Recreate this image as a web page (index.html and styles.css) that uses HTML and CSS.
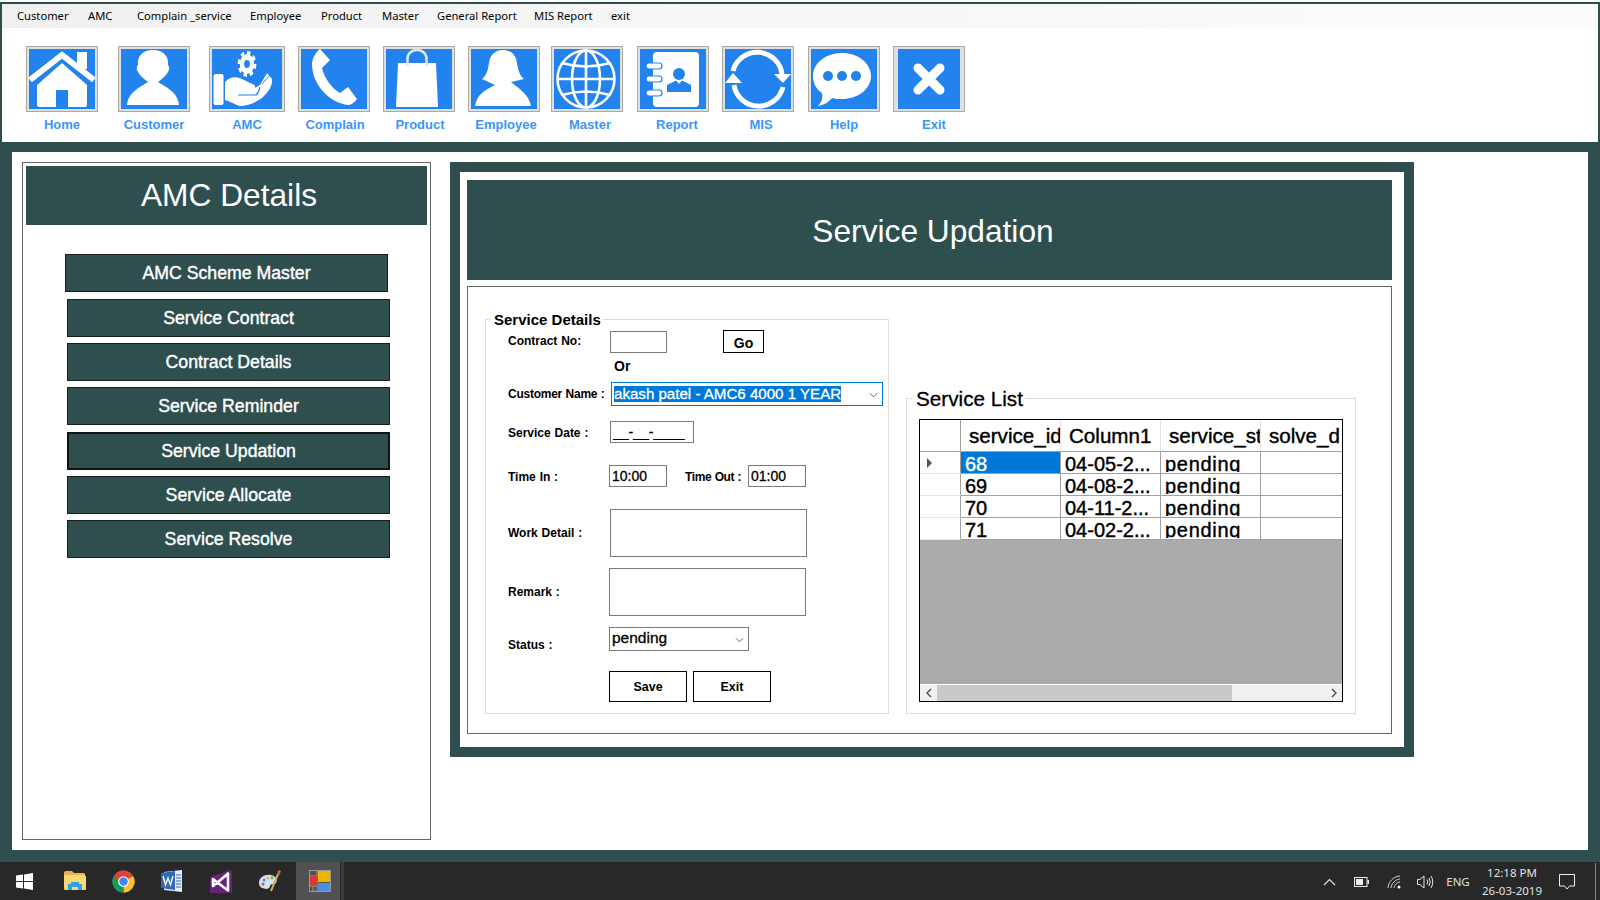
FILE: index.html
```html
<!DOCTYPE html>
<html lang="en">
<head>
  <meta charset="UTF-8">
  <meta name="viewport" content="width=device-width, initial-scale=1.0">
  <title>Service Updation</title>
  <link rel="stylesheet" href="styles.css">
</head>
<body>
  <div class="frame">
    <header class="header">
      <nav class="menu">
        <span>Customer</span>
        <span>AMC</span>
        <span>Complain _service</span>
        <span>Employee</span>
        <span>Product</span>
        <span>Master</span>
        <span>General Report</span>
        <span>MIS Report</span>
        <span>exit</span>
      </nav>
      <div class="toolbar">
        <div class="tool">
          <div class="tool-box">
            <svg viewBox="0 0 66 60" class="tool-icon">
              <path d="M1 31 L33 6 L65 31" class="line" stroke-width="6"/>
              <path d="M48 3 H58 V20 H48Z" class="solid"/>
              <path d="M33 14 L58 36 V56 Q58 58 56 58 H39 V41 H27 V58 H10 Q8 58 8 56 V36Z" class="solid"/>
            </svg>
          </div>
          <div class="tool-label">Home</div>
        </div>
        <div class="tool">
          <div class="tool-box">
            <svg viewBox="0 0 66 60" class="tool-icon">
              <path d="M6 56 C7 46 13 41 27 33 C22 29 18 26 16.5 22 C15 20 16 17 17 16 C16 7 22 1 32 1 C42 1 48 7 47 16 C48 17 49 20 47.5 22 C46 26 42 29 37 33 C51 41 57 46 58 56Z" class="solid"/>
            </svg>
          </div>
          <div class="tool-label">Customer</div>
        </div>
        <div class="tool tool-wide">
          <div class="tool-box">
            <svg viewBox="0 0 70 60" class="tool-icon">
              <g transform="translate(35 15) scale(0.72 1)">
                <circle r="10" class="solid"/>
                <circle r="11" class="teeth" stroke-width="4" stroke-dasharray="4.6 4"/>
                <circle r="4" class="hole"/>
              </g>
              <rect x="1.5" y="25" width="10" height="31" rx="2" class="solid"/>
              <path d="M13 33 C17 28 24 27 30 30 L38 34 C42 35 44 37 43 39 L48 36 L55 24 L60 30 C61 36 56 44 51 48 C44 54 34 57 28 57 C23 56 18 52 13 51Z" class="solid"/>
              <path d="M26 46 H43 C46 46 47 42 48 38" class="cut" stroke-width="1.2"/>
              <path d="M47 32 L55 23 M50 35 L58 26" class="cut" stroke-width="1"/>
            </svg>
          </div>
          <div class="tool-label">AMC</div>
        </div>
        <div class="tool">
          <div class="tool-box">
            <svg viewBox="0 0 66 60" class="tool-icon">
              <path d="M19 0 L29 11 L21 19 C23 28 30 39 39 44 L47 38 L56 50 C53 54 50 56 47 56 C30 54 12 38 11 16 C11 10 14 4 19 0Z" class="solid"/>
            </svg>
          </div>
          <div class="tool-label nudge-1">Complain</div>
        </div>
        <div class="tool">
          <div class="tool-box">
            <svg viewBox="0 0 66 60" class="tool-icon">
              <path d="M12 14 H50 L52 58 H10Z" class="solid"/>
              <path d="M21.5 17 V10 C21.5 -2 40.5 -2 40.5 10 V17" class="handle" stroke-width="2.5"/>
            </svg>
          </div>
          <div class="tool-label nudge-1">Product</div>
        </div>
        <div class="tool">
          <div class="tool-box">
            <svg viewBox="0 0 66 60" class="tool-icon">
              <path d="M4 57 C6 46 12 42 24 36 L11 30 C16 26 17 20 18 14 C19 5 25 1 32 1 C39 1 45 5 46 14 C47 20 48 26 53 30 L40 33 C50 41 58 46 60 57Z" class="solid"/>
            </svg>
          </div>
          <div class="tool-label nudge-2">Employee</div>
        </div>
        <div class="tool">
          <div class="tool-box">
            <svg viewBox="0 0 66 60" class="tool-icon">
              <g class="line" stroke-width="2.6">
                <circle cx="32" cy="30" r="28.5"/>
                <ellipse cx="32" cy="30" rx="14" ry="28.5"/>
                <path d="M32 1 V59 M3 30 H61"/>
                <path d="M8 14 Q32 21 56 14 M8 46 Q32 39 56 46"/>
              </g>
            </svg>
          </div>
          <div class="tool-label nudge-3">Master</div>
        </div>
        <div class="tool">
          <div class="tool-box">
            <svg viewBox="0 0 66 60" class="tool-icon">
              <rect x="13" y="3" width="46" height="55" rx="4" class="solid"/>
              <g class="ring-bars" stroke-width="1.2">
                <rect x="6" y="14" width="16" height="6" rx="3"/>
                <rect x="6" y="27" width="16" height="6" rx="3"/>
                <rect x="6" y="41" width="16" height="6" rx="3"/>
              </g>
              <circle cx="39" cy="25" r="6" class="hole"/>
              <path d="M27 43 V36 L36 31.5 L39 35 L42 31.5 L51 36 V43Z" class="hole"/>
            </svg>
          </div>
          <div class="tool-label nudge-4">Report</div>
        </div>
        <div class="tool">
          <div class="tool-box">
            <svg viewBox="0 0 66 60" class="tool-icon">
              <path d="M8 22 A25 25 0 0 1 57 25" class="line" stroke-width="5"/>
              <path d="M58 38 A25 25 0 0 1 9 36" class="line" stroke-width="5"/>
              <path d="M49 25 H66 L58 34Z" class="solid"/>
              <path d="M0 34 H17 L8 24Z" class="solid"/>
            </svg>
          </div>
          <div class="tool-label nudge-3">MIS</div>
        </div>
        <div class="tool">
          <div class="tool-box">
            <svg viewBox="0 0 66 60" class="tool-icon">
              <path d="M7 57 C10 54 12 50 11 44 C5 40 2 34 2 27 C2 14 15 4 31 4 C47 4 60 14 60 27 C60 40 47 50 31 50 C27 50 24 50 21 49 C18 53 13 56 7 57Z" class="solid"/>
              <circle cx="17" cy="27" r="5" class="hole"/>
              <circle cx="31" cy="27" r="5" class="hole"/>
              <circle cx="45" cy="27" r="5" class="hole"/>
            </svg>
          </div>
          <div class="tool-label">Help</div>
        </div>
        <div class="tool">
          <div class="tool-box tool-box-thick">
            <svg viewBox="0 0 62 60" class="tool-icon">
              <path d="M20 19 L42 41 M42 19 L20 41" class="line round" stroke-width="9"/>
            </svg>
          </div>
          <div class="tool-label nudge-5">Exit</div>
        </div>
      </div>
    </header>

    <main class="desk">
      <aside class="side-panel">
        <div class="side-title">AMC Details</div>
        <div class="side-list">
          <button class="side-btn side-btn-first">AMC Scheme Master</button>
          <button class="side-btn">Service Contract</button>
          <button class="side-btn">Contract Details</button>
          <button class="side-btn side-btn-loose">Service Reminder</button>
          <button class="side-btn side-btn-active">Service Updation</button>
          <button class="side-btn">Service Allocate</button>
          <button class="side-btn">Service Resolve</button>
        </div>
      </aside>

      <section class="form-panel">
        <div class="form-title">Service Updation</div>
        <div class="form-box">
          <div class="group group-details">
            <span class="group-legend legend-small">Service Details</span>
            <div class="form-rows">
              <div class="row">
                <label class="row-label label-raised">Contract No:</label>
                <input class="field field-contract" type="text">
                <button class="btn btn-go">Go</button>
              </div>
              <div class="row row-or">Or</div>
              <div class="row">
                <label class="row-label row-label-wide">Customer Name :</label>
                <div class="combo combo-focus">
                  <span class="combo-selected">akash patel - AMC6 4000 1 YEAR</span>
                  <svg class="chevron" viewBox="0 0 10 6"><path d="M1 1 L5 5 L9 1"/></svg>
                </div>
              </div>
              <div class="row">
                <label class="row-label label-low">Service Date :</label>
                <input class="field field-date" type="text" value="__-__-____">
              </div>
              <div class="row">
                <label class="row-label row-label-narrow label-low">Time In :</label>
                <input class="field field-time" type="text" value="10:00">
                <label class="row-label label-out label-low">Time Out :</label>
                <input class="field field-time" type="text" value="01:00">
              </div>
              <div class="row">
                <label class="row-label">Work Detail :</label>
                <textarea class="field field-area"></textarea>
              </div>
              <div class="row">
                <label class="row-label row-label-narrow">Remark :</label>
                <textarea class="field field-area"></textarea>
              </div>
              <div class="row row-top">
                <label class="row-label row-label-narrow label-status">Status :</label>
                <div class="combo combo-status">
                  <span>pending</span>
                  <svg class="chevron" viewBox="0 0 10 6"><path d="M1 1 L5 5 L9 1"/></svg>
                </div>
              </div>
              <div class="row row-actions">
                <button class="btn btn-action">Save</button>
                <button class="btn btn-action">Exit</button>
              </div>
            </div>
          </div>

          <div class="group group-list">
            <span class="group-legend legend-big">Service List</span>
            <div class="grid-view">
              <div class="grid-rows">
                <table class="grid-table">
                  <thead>
                    <tr>
                      <th class="row-head"></th>
                      <th><div class="clip">service_id</div></th>
                      <th><div class="clip">Column1</div></th>
                      <th><div class="clip">service_st</div></th>
                      <th><div class="clip">solve_d</div></th>
                    </tr>
                  </thead>
                  <tbody>
                    <tr>
                      <td class="row-head"><span class="row-arrow"></span></td>
                      <td class="cell-selected"><div class="clip">68</div></td>
                      <td><div class="clip">04-05-2...</div></td>
                      <td><div class="clip cell-status">pending</div></td>
                      <td></td>
                    </tr>
                    <tr>
                      <td class="row-head"></td>
                      <td><div class="clip">69</div></td>
                      <td><div class="clip">04-08-2...</div></td>
                      <td><div class="clip cell-status">pending</div></td>
                      <td></td>
                    </tr>
                    <tr>
                      <td class="row-head"></td>
                      <td><div class="clip">70</div></td>
                      <td><div class="clip">04-11-2...</div></td>
                      <td><div class="clip cell-status">pending</div></td>
                      <td></td>
                    </tr>
                    <tr>
                      <td class="row-head"></td>
                      <td><div class="clip">71</div></td>
                      <td><div class="clip">04-02-2...</div></td>
                      <td><div class="clip cell-status">pending</div></td>
                      <td></td>
                    </tr>
                  </tbody>
                </table>
              </div>
              <div class="grid-empty"></div>
              <div class="scrollbar">
                <span class="scroll-btn"><svg viewBox="0 0 6 10"><path d="M5 1 L1 5 L5 9"/></svg></span>
                <span class="scroll-track"><span class="scroll-thumb"></span></span>
                <span class="scroll-btn"><svg viewBox="0 0 6 10"><path d="M1 1 L5 5 L1 9"/></svg></span>
              </div>
            </div>
          </div>
        </div>
      </section>
    </main>
  </div>

  <footer class="taskbar">
    <div class="task-apps">
      <span class="task-slot">
        <svg width="17" height="17" viewBox="0 0 17 17"><path d="M0 2.6 L7 1.6 V8 H0Z M8 1.4 L17 0 V8 H8Z M0 9 H7 V15.4 L0 14.4Z M8 9 H17 V17 L8 15.6Z" fill="#fff"/></svg>
      </span>
      <span class="task-slot task-slot-folder">
        <svg width="22" height="20" viewBox="0 0 22 20">
          <path d="M0 2 Q0 0 2 0 H8 L10 2 H20 Q21 2 21 3 V5 H0Z" fill="#e6b845"/>
          <path d="M0 4 H20 Q22 4 22 6 V18 Q22 19 21 19 H1 Q0 19 0 18Z" fill="#fbd873"/>
          <path d="M4 19 V13 H7 V11 H15 V13 H18 V19 H14 V16 H8 V19Z" fill="#2ba3e6"/>
        </svg>
      </span>
      <span class="task-slot">
        <svg width="23" height="23" viewBox="0 0 24 24">
          <circle cx="12" cy="12" r="11.5" fill="#db4437"/>
          <path d="M12 12 L22 6.2 A11.5 11.5 0 0 1 12 23.5Z" fill="#fbc02d"/>
          <path d="M12 12 L12 23.5 A11.5 11.5 0 0 1 2 6.2Z" fill="#0f9d58"/>
          <path d="M12 6.5 H22 A11.5 11.5 0 0 0 2.4 5.6 L7 13Z" fill="#db4437"/>
          <circle cx="12" cy="12" r="5.6" fill="#fff"/>
          <circle cx="12" cy="12" r="4.4" fill="#4285f4"/>
        </svg>
      </span>
      <span class="task-slot">
        <svg width="23" height="23" viewBox="0 0 23 23">
          <path d="M3 2 L21 0 V22 L3 20Z" fill="#e6edf8"/>
          <path d="M0 3 L14 1 V20 L0 18Z" fill="#2f68b5"/>
          <path d="M15 5 H20 M15 8 H20 M15 11 H20 M15 14 H20 M15 17 H20" stroke="#2f68b5" stroke-width="1"/>
          <path d="M2 6 L4.5 15 L7 8 L9.5 15 L12 6" fill="none" stroke="#fff" stroke-width="1.4"/>
        </svg>
      </span>
      <span class="task-slot">
        <svg width="22" height="23" viewBox="0 0 22 23">
          <path d="M20 0 L22 1 V23 H0 V7Z" fill="#68217a"/>
          <path d="M3 9 L7.5 12.5 L18 3.5 V20.5 L7.5 12.5 L3 16Z" fill="none" stroke="#fff" stroke-width="2.6" stroke-linejoin="round"/>
        </svg>
      </span>
      <span class="task-slot">
        <svg width="24" height="24" viewBox="0 0 24 24">
          <path d="M1 14 C1 8 7 5 13 6 C18 7 20 11 18 14 C16 16 13 14 12 17 C11 21 7 20 4 19 C2 18 1 16 1 14Z" fill="#cfe4f0"/>
          <circle cx="6" cy="11" r="1.5" fill="#3a8fd0"/>
          <circle cx="10" cy="9" r="1.5" fill="#e8b92e"/>
          <circle cx="5" cy="15" r="1.5" fill="#d9483b"/>
          <circle cx="14" cy="9" r="1.4" fill="#5fb04a"/>
          <path d="M13 22 L20 5" stroke="#d9a766" stroke-width="2"/>
          <path d="M19 6 L20 1 L23 2 L21 7Z" fill="#b5763a"/>
        </svg>
      </span>
      <span class="task-tile">
        <svg width="22" height="22" viewBox="0 0 22 22">
          <rect x="0.5" y="0.5" width="21" height="21" fill="none" stroke="#9a9a9a"/>
          <path d="M0 6 H8 M0 16 H8 M8 0 V22 M4 16 V22" stroke="#9a9a9a" fill="none"/>
          <rect x="1" y="6" width="7" height="9" fill="#d73a32"/>
          <rect x="9" y="1" width="12" height="11" fill="#f0b400"/>
          <rect x="9" y="13" width="12" height="8" fill="#4a90e2"/>
        </svg>
      </span>
      <span class="task-tile-edge"></span>
    </div>
    <div class="tray">
      <span class="tray-slot tray-chevron">
        <svg width="13" height="8" viewBox="0 0 13 8"><path d="M1 7 L6.5 1.5 L12 7" fill="none" stroke="#e6e6e6" stroke-width="1.2"/></svg>
      </span>
      <span class="tray-slot tray-battery">
        <svg width="15" height="10" viewBox="0 0 15 10"><rect x="0.5" y="0.5" width="12.5" height="9" fill="none" stroke="#eee"/><rect x="2" y="2" width="7" height="6" fill="#eee"/><rect x="13.5" y="3" width="1.5" height="4" fill="#eee"/></svg>
      </span>
      <span class="tray-slot tray-wifi">
        <svg width="14" height="14" viewBox="0 0 14 14" fill="none" stroke="#d8d8d8" stroke-width="1"><path d="M1 13 C1 7 7 1 13 1 M4 13 C4 9 9 4 13 4 M7 13 C7 11 10 7 13 7"/><circle cx="12" cy="12" r="1.5" fill="#fff" stroke="none"/></svg>
      </span>
      <span class="tray-slot tray-volume">
        <svg width="17" height="14" viewBox="0 0 17 14" fill="none" stroke="#e6e6e6" stroke-width="1"><path d="M0.5 4.5 H3 L7 1 V13 L3 9.5 H0.5Z M10 4.5 Q11.5 7 10 9.5 M12 3 Q14.5 7 12 11 M14 1 Q17.5 7 14 13"/></svg>
      </span>
      <span class="tray-slot tray-lang">ENG</span>
      <span class="tray-slot tray-clock">
        <span>12:18 PM</span>
        <span>26-03-2019</span>
      </span>
      <span class="tray-slot tray-note">
        <svg width="16" height="16" viewBox="0 0 16 16"><path d="M0.5 0.5 H15.5 V12 H10.5 L8 15 L5.5 12 H0.5Z" fill="none" stroke="#eee"/></svg>
      </span>
      <span class="tray-peek"></span>
    </div>
  </footer>
</body>
</html>
```

FILE: styles.css
```css
* {
  margin: 0;
  padding: 0;
  box-sizing: border-box;
  font-family: "Liberation Sans", Arial, sans-serif;
}

body {
  width: 1600px;
  height: 900px;
  overflow: hidden;
  background-color: #2f4f4f;
  display: flex;
  flex-direction: column;
}

.frame {
  height: 862px;
  background-color: #2f4f4f;
  border-top: 2px solid #fff;
  padding: 2px 2px 0;
  display: flex;
  flex-direction: column;
}

/* top menu and icon bar */
.header {
  height: 138px;
  background-color: #fff;
}

.menu {
  height: 24px;
  background: linear-gradient(to right, #f0f0f0, #f6f6f6 40%, #fcfcfc);
  display: grid;
  grid-template-columns: 71px 49px 113px 71px 61px 55px 97px 77px auto;
  justify-content: start;
  align-items: center;
  padding: 0 0 2px 15px;
}

.menu span {
  font-family: "Noto Sans", sans-serif;
  font-size: 11.2px;
  color: #000;
  white-space: nowrap;
}

.toolbar {
  display: grid;
  grid-template-columns: 92px 91px 89px 85px 85px 83px 86px 85px 86px 85px 72px;
  padding: 18px 0 0 24px;
}

.tool {
  width: 72px;
}

.tool-wide {
  width: 76px;
}

.tool-box {
  height: 66px;
  border: 1px solid #a9a9a9;
  padding: 2px;
  background-color: #e0e0e0;
}

.tool-box-thick {
  padding: 2px 4px;
}

.tool-icon {
  display: block;
  width: 100%;
  height: 100%;
  background-color: #2283ee;
}

.solid { fill: #fff; }
.hole { fill: #2283ee; }
.line { fill: none; stroke: #fff; }
.round { stroke-linecap: round; }
.cut { fill: none; stroke: #2283ee; }
.teeth { fill: none; stroke: #fff; }
.handle { fill: none; stroke: #e4e4e4; }
.ring-bars rect { fill: #fff; stroke: #2283ee; }

.tool-label {
  margin-top: 5px;
  text-align: center;
  font-size: 13px;
  font-weight: bold;
  line-height: 16px;
  color: #3a95fd;
  white-space: nowrap;
}

.nudge-1 { padding-left: 2px; }
.nudge-2 { padding-left: 4px; }
.nudge-3 { padding-left: 6px; }
.nudge-4 { padding-left: 8px; }
.nudge-5 { padding-left: 10px; }

/* white work area */
.desk {
  height: 698px;
  margin: 10px 10px 0;
  background-color: #fff;
  padding: 10px;
  display: flex;
  align-items: flex-start;
  gap: 19px;
}

.side-panel {
  width: 409px;
  height: 678px;
  border: 1px solid #666;
  padding: 3px;
}

.side-title {
  height: 59px;
  background-color: #2f4f4f;
  color: #fff;
  font-size: 31.7px;
  line-height: 59px;
  text-align: center;
  padding-left: 5px;
}

.side-list {
  display: flex;
  flex-direction: column;
  gap: 6px;
  padding: 29px 0 0 41px;
}

.side-btn {
  width: 323px;
  height: 38px;
  background-color: #2f4f4f;
  border: 1px solid #14201f;
  color: #fff;
  font-size: 17.7px;
  -webkit-text-stroke: 0.4px #fff;
}

.side-btn-first {
  margin-left: -2px;
  margin-bottom: 1px;
}

.side-btn-loose {
  margin-bottom: 1px;
}

.side-btn-active {
  border: 2px solid #0d1414;
}

.form-panel {
  width: 964px;
  height: 595px;
  border: 10px solid #2f4f4f;
  padding: 8px 12px 13px 7px;
  display: flex;
  flex-direction: column;
  gap: 6px;
}

.form-title {
  height: 100px;
  background-color: #2f4f4f;
  color: #fff;
  font-size: 31.7px;
  line-height: 102px;
  text-align: center;
  padding-left: 7px;
}

.form-box {
  flex: 1;
  border: 1px solid #666;
  padding: 0 0 19px 17px;
  display: flex;
  align-items: flex-end;
  gap: 17px;
}

.group {
  position: relative;
  border: 1px solid #dcdcdc;
}

.group-details {
  width: 404px;
  height: 395px;
}

.group-list {
  width: 450px;
  height: 316px;
  padding: 20px 0 0 12px;
}

.group-legend {
  position: absolute;
  background-color: #fff;
  padding: 0 2px 0 3px;
  color: #000;
  white-space: nowrap;
}

.legend-small {
  top: -9px;
  left: 5px;
  font-size: 15px;
  font-weight: bold;
  line-height: 17px;
}

.legend-big {
  top: -12px;
  left: 6px;
  font-size: 20.7px;
  line-height: 23px;
  -webkit-text-stroke: 0.3px #000;
}

.form-rows {
  display: grid;
  grid-template-rows: 27px 25px 39px 44px 44px 59px 59px 44px 31px;
  padding: 10px 0 0 22px;
  align-items: start;
}

.row {
  display: flex;
  align-items: center;
}

.row-top {
  align-items: flex-start;
}

.row-or {
  padding-left: 106px;
  font-size: 14px;
  font-weight: bold;
  line-height: 18px;
}

.row-label {
  width: 102px;
  flex-shrink: 0;
  font-size: 12px;
  font-weight: bold;
  word-spacing: 0.5px;
  white-space: nowrap;
  color: #000;
}

.row-label-narrow { width: 101px; }

.row-label-wide {
  width: 103px;
  letter-spacing: -0.25px;
}

.label-raised {
  padding-bottom: 2px;
}

.label-low {
  padding-top: 2px;
}

.label-out {
  width: 63px;
  margin-left: 18px;
  letter-spacing: -0.4px;
}

.label-status {
  margin-top: 11px;
}

.field {
  display: block;
  border: 1px solid #7a7a7a;
  background-color: #fff;
  font-size: 14px;
  color: #000;
  padding: 0 2px;
  outline: none;
  resize: none;
  -webkit-text-stroke: 0.3px #000;
}

.field-contract {
  width: 57px;
  height: 22px;
}

.field-date {
  width: 84px;
  height: 22px;
}

.field-time {
  width: 58px;
  height: 22px;
}

.field-area {
  width: 197px;
  height: 48px;
}

.btn {
  background-color: #fff;
  border: 1px solid #000;
  color: #000;
  font-weight: bold;
}

.btn-go {
  width: 41px;
  height: 23px;
  margin-left: 56px;
  padding-top: 3px;
  font-size: 14px;
}

.btn-action {
  width: 78px;
  height: 31px;
  font-size: 12.5px;
}

.row-actions {
  gap: 6px;
  padding-left: 101px;
}

.combo {
  position: relative;
  display: flex;
  background-color: #fff;
  color: #000;
}

.combo-focus {
  width: 272px;
  height: 24px;
  border: 1px solid #0078d7;
  padding: 3px 0 0 2px;
  font-size: 15.1px;
}

.combo-selected {
  height: 16px;
  line-height: 15px;
  background-color: #0078d7;
  color: #fff;
  white-space: nowrap;
  -webkit-text-stroke: 0.3px #fff;
}

.combo-status {
  width: 140px;
  height: 24px;
  border: 1px solid #7a7a7a;
  padding: 1px 0 0 2px;
  font-size: 15.5px;
  line-height: 17px;
  -webkit-text-stroke: 0.3px #000;
}

.chevron {
  position: absolute;
  right: 4px;
  top: 9px;
  width: 9px;
  height: 6px;
  fill: none;
  stroke: #555;
  stroke-width: 1;
}

/* data grid */
.grid-view {
  width: 424px;
  height: 283px;
  border: 1px solid #000;
  display: flex;
  flex-direction: column;
  background-color: #ababab;
}

.grid-rows {
  height: 120px;
  overflow: hidden;
  background-color: #fff;
}

.grid-table {
  width: 441px;
  table-layout: fixed;
  border-collapse: separate;
  border-spacing: 0;
  font-size: 20px;
  color: #000;
  -webkit-text-stroke: 0.4px #000;
}

.grid-table th {
  width: 100px;
  height: 32px;
  font-weight: normal;
  font-size: 20.6px;
  text-align: left;
  padding-left: 8px;
  border-right: 1px solid #e2e2e2;
  border-bottom: 1px solid #a0a0a0;
}

.grid-table td {
  height: 22px;
  padding-left: 4px;
  border-right: 1px solid #a0a0a0;
  border-bottom: 1px solid #a0a0a0;
}

.grid-table .row-head {
  width: 41px;
  padding: 0 0 0 7px;
  border-right-color: #a0a0a0;
  border-bottom-color: #e6e6e6;
}

.grid-table thead .row-head {
  border-bottom-color: #a0a0a0;
}

.grid-table .cell-selected {
  background-color: #0078d7;
  color: #fff;
  -webkit-text-stroke: 0.4px #fff;
}

.clip {
  overflow: hidden;
  white-space: nowrap;
  line-height: 22px;
  height: 19px;
}

.cell-status {
  letter-spacing: 0.7px;
}

.grid-table th .clip {
  height: auto;
  line-height: 25px;
}

.row-arrow {
  display: block;
  width: 0;
  height: 0;
  border-left: 5px solid #555;
  border-top: 5px solid transparent;
  border-bottom: 5px solid transparent;
}

.grid-empty {
  flex: 1;
}

.scrollbar {
  height: 17px;
  background-color: #f0f0f0;
  border-top: 1px solid #fff;
  display: flex;
}

.scroll-btn {
  width: 17px;
  display: flex;
  align-items: center;
  justify-content: center;
}

.scroll-btn svg {
  width: 6px;
  height: 10px;
  fill: none;
  stroke: #555;
  stroke-width: 1.5;
}

.scroll-track {
  flex: 1;
}

.scroll-thumb {
  display: block;
  width: 295px;
  height: 100%;
  background-color: #c9c9c9;
}

/* windows taskbar */
.taskbar {
  height: 38px;
  background-color: #282828;
  display: flex;
  justify-content: space-between;
}

.task-apps {
  display: grid;
  grid-template-columns: 48px 51px 49px 48px 50px 48px 44px 4px;
}

.task-slot {
  display: flex;
  align-items: center;
  justify-content: center;
}

.task-slot-folder {
  padding-left: 2px;
}

.task-tile {
  margin-left: 2px;
  width: 44px;
  background-color: #515151;
  display: flex;
  align-items: center;
  justify-content: center;
  padding-left: 4px;
}

.task-tile-edge {
  margin-left: 3px;
  width: 3px;
  background-color: #3c3c3c;
}

.tray {
  display: flex;
  color: #e2e2e2;
  font-size: 11.5px;
  padding-top: 1px;
}

.tray-slot {
  display: flex;
  align-items: center;
  justify-content: center;
}

.tray-chevron { width: 32px; }
.tray-battery { width: 32px; }
.tray-wifi { width: 33px; }
.tray-volume { width: 30px; }

.tray-lang {
  width: 36px;
  font-family: "Noto Sans", sans-serif;
}

.tray-clock {
  width: 72px;
  flex-direction: column;
  line-height: 18px;
}

.tray-clock span {
  font-family: "Noto Sans", sans-serif;
  white-space: nowrap;
}

.tray-note { width: 38px; }

.tray-peek {
  width: 14px;
  border-right: 4px solid #282828;
  box-shadow: inset -1px 0 0 #888;
}
```
